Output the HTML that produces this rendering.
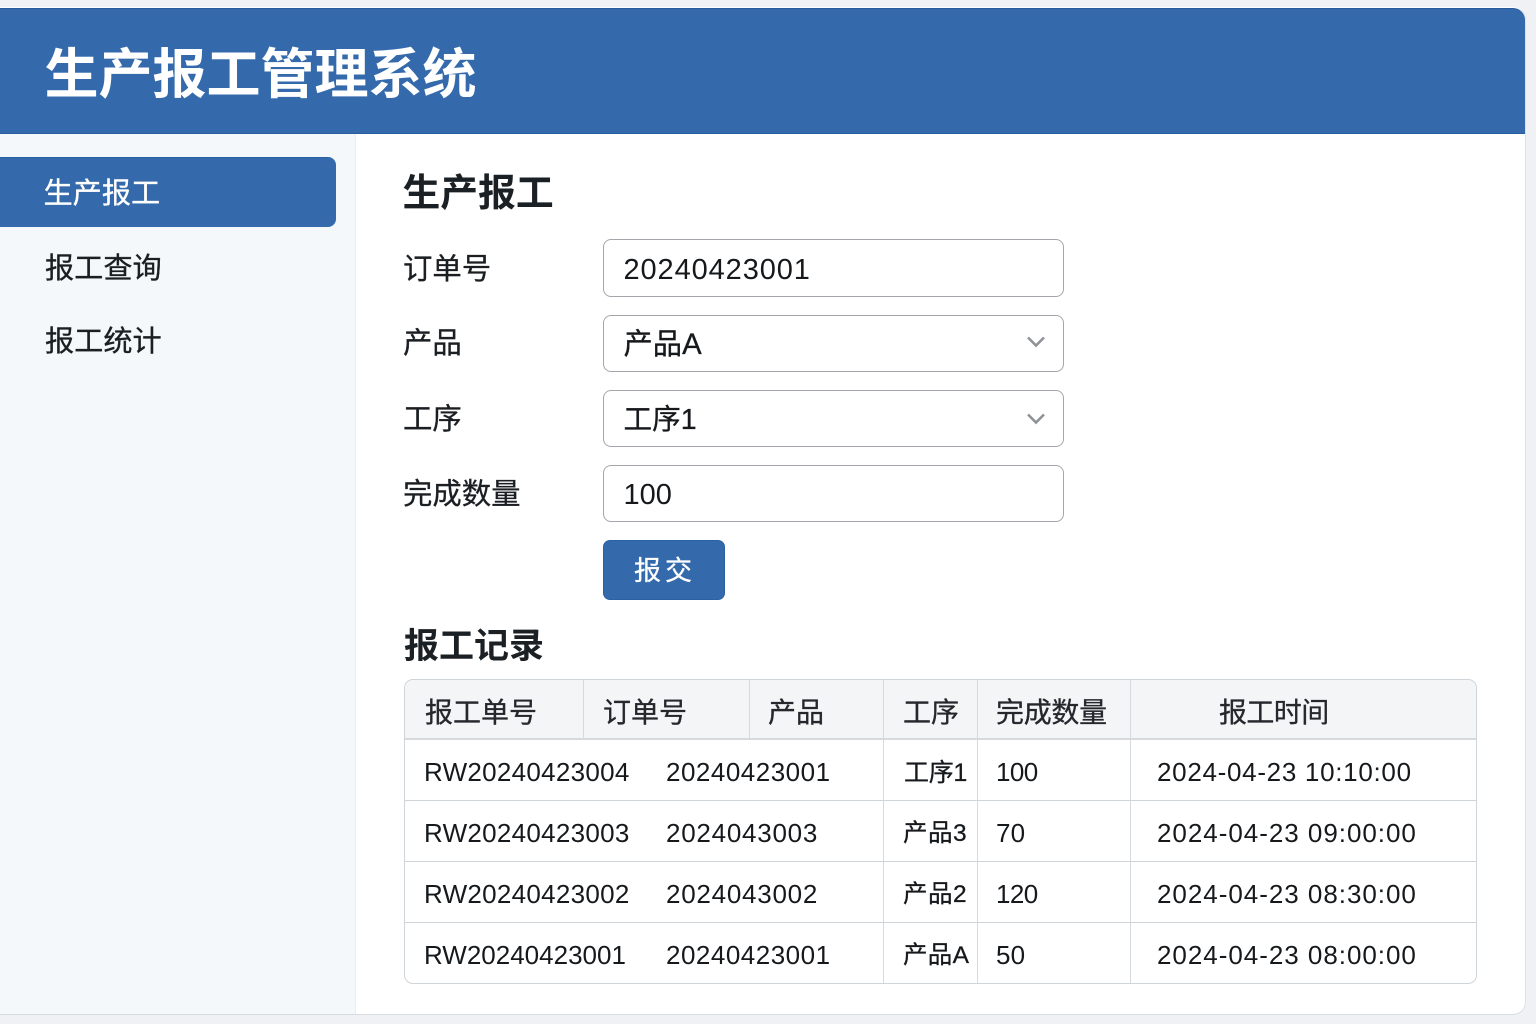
<!DOCTYPE html>
<html lang="zh-CN"><head><meta charset="utf-8"><title>生产报工管理系统</title>
<style>
html,body{margin:0;padding:0;background:#f0f1f4}
body{position:relative;width:1536px;height:1024px;overflow:hidden;font-family:"Liberation Sans","Noto Sans CJK SC",sans-serif;color:#1b1f23}
div{box-sizing:border-box}
.a{position:absolute}
.t{position:absolute;white-space:nowrap;line-height:40px;height:40px}
.s{-webkit-text-stroke:.3px currentColor}
.box{position:absolute;left:603px;width:461px;border:1.5px solid #a3a6aa;border-radius:8px;background:#fff}
.lb{font-size:29.4px;left:403px;-webkit-text-stroke:.3px currentColor}
.val{font-size:29px;left:623.5px;color:#16191c}
.th{font-size:28px;top:692.5px;color:#24282c;-webkit-text-stroke:.3px currentColor}
.td{font-size:26px;color:#16191c}
.cj{font-size:24.5px;-webkit-text-stroke:.3px currentColor}
.hl{position:absolute;left:405px;width:1071px;height:1px;background:#cfd4d8}
.vl{position:absolute;width:1px;background:#d5dade}
</style></head><body>
<div class="a" style="left:0;top:7px;width:1526px;height:1008px;background:#fff;border-radius:0 13px 13px 0;border-right:1px solid #dfe1e5;border-bottom:1px solid #d9dcdf"></div>
<div class="a" style="left:0;top:8px;width:1525px;height:126px;background:#346aab;border-radius:0 12px 0 0;border-top:1px solid #285a9a;border-bottom:1px solid #2a5d9d"></div>
<div class="t" style="left:44.5px;top:55px;font-size:54px;font-weight:700;color:#fff">生产报工管理系统</div>

<div class="a" style="left:0;top:134px;width:356px;height:880px;background:#f5f8fa;border-right:1px solid #e9ecef"></div>
<div class="a" style="left:0;top:157px;width:336px;height:70px;background:#346aab;border-top:1px solid #2a62a8;border-radius:0 8px 8px 0"></div>
<div class="t s" style="left:43.5px;top:174px;font-size:29.2px;color:#fff">生产报工</div>
<div class="t s" style="left:45px;top:249px;font-size:29.2px;color:#1b1f23">报工查询</div>
<div class="t s" style="left:45px;top:322px;font-size:29.2px;color:#1b1f23">报工统计</div>

<div class="t" style="left:402.5px;top:174px;font-size:37.8px;font-weight:700;color:#1b2025">生产报工</div>
<div class="t lb" style="top:250px">订单号</div>
<div class="t lb" style="top:324px">产品</div>
<div class="t lb" style="top:399.5px">工序</div>
<div class="t lb" style="top:475px">完成数量</div>

<div class="box" style="top:239px;height:58px"></div>
<div class="t val" style="top:250px;letter-spacing:.9px">20240423001</div>
<div class="box" style="top:315px;height:57px"></div>
<div class="t val s" style="top:325px;font-size:29.3px">产品A</div>
<svg class="a" style="left:1026px;top:335px" width="20" height="14" viewBox="0 0 20 14"><path d="M2 2.5 L10 10.5 L18 2.5" fill="none" stroke="#8f9397" stroke-width="2.6"/></svg>
<div class="box" style="top:390px;height:57px"></div>
<div class="t val s" style="top:400px;font-size:28.6px">工序1</div>
<svg class="a" style="left:1026px;top:412px" width="20" height="14" viewBox="0 0 20 14"><path d="M2 2.5 L10 10.5 L18 2.5" fill="none" stroke="#8f9397" stroke-width="2.6"/></svg>
<div class="box" style="top:465px;height:57px"></div>
<div class="t val" style="top:475px;letter-spacing:0">100</div>

<div class="a" style="left:603px;top:540px;width:122px;height:60px;background:#346aab;border:1px solid #2a60a4;border-radius:7px"></div>
<div class="t s" style="left:634px;top:551px;font-size:27px;letter-spacing:4px;color:#fff">报交</div>

<div class="t" style="left:404px;top:627px;font-size:35px;font-weight:700;color:#1b2025">报工记录</div>

<div class="a" style="left:404px;top:679px;width:1073px;height:305px;border:1.5px solid #cfd4d8;border-radius:9px;background:#fff"></div>
<div class="a" style="left:405px;top:680px;width:1071px;height:60px;background:#f3f5f7;border-radius:8px 8px 0 0;border-bottom:2px solid #d6dadd"></div>
<div class="hl" style="top:800px"></div>
<div class="hl" style="top:861px"></div>
<div class="hl" style="top:922px"></div>
<div class="vl" style="left:583px;top:680px;height:59px"></div>
<div class="vl" style="left:749px;top:680px;height:59px"></div>
<div class="vl" style="left:883px;top:680px;height:303px"></div>
<div class="vl" style="left:977px;top:680px;height:303px"></div>
<div class="vl" style="left:1130px;top:680px;height:303px"></div>

<div class="t th" style="left:425px">报工单号</div>
<div class="t th" style="left:603px">订单号</div>
<div class="t th" style="left:768px">产品</div>
<div class="t th" style="left:903px">工序</div>
<div class="t th" style="left:996px;letter-spacing:-.3px">完成数量</div>
<div class="t th" style="left:1219px;letter-spacing:-.6px">报工时间</div>

<div class="t td" style="left:424px;top:752px;letter-spacing:.29px">RW20240423004</div>
<div class="t td" style="left:666px;top:752px;letter-spacing:.5px">20240423001</div>
<div class="t td cj" style="left:904px;top:753px;font-size:25px;letter-spacing:-.3px">工序1</div>
<div class="t td" style="left:996px;top:752px;letter-spacing:-.6px">100</div>
<div class="t td" style="left:1157px;top:752px;letter-spacing:.7px">2024-04-23 10:10:00</div>

<div class="t td" style="left:424px;top:813px;letter-spacing:.29px">RW20240423003</div>
<div class="t td" style="left:666px;top:813px;letter-spacing:.75px">2024043003</div>
<div class="t td cj" style="left:903px;top:814px;letter-spacing:.5px">产品3</div>
<div class="t td" style="left:996px;top:813px;letter-spacing:.2px">70</div>
<div class="t td" style="left:1157px;top:813px;letter-spacing:.97px">2024-04-23 09:00:00</div>

<div class="t td" style="left:424px;top:874px;letter-spacing:.29px">RW20240423002</div>
<div class="t td" style="left:666px;top:874px;letter-spacing:.75px">2024043002</div>
<div class="t td cj" style="left:903px;top:875px;letter-spacing:.5px">产品2</div>
<div class="t td" style="left:996px;top:874px;letter-spacing:-.6px">120</div>
<div class="t td" style="left:1157px;top:874px;letter-spacing:.97px">2024-04-23 08:30:00</div>

<div class="t td" style="left:424px;top:935px;letter-spacing:0">RW20240423001</div>
<div class="t td" style="left:666px;top:935px;letter-spacing:.5px">20240423001</div>
<div class="t td cj" style="left:903px;top:936px;letter-spacing:.3px">产品A</div>
<div class="t td" style="left:996px;top:935px;letter-spacing:.2px">50</div>
<div class="t td" style="left:1157px;top:935px;letter-spacing:.97px">2024-04-23 08:00:00</div>
</body></html>
